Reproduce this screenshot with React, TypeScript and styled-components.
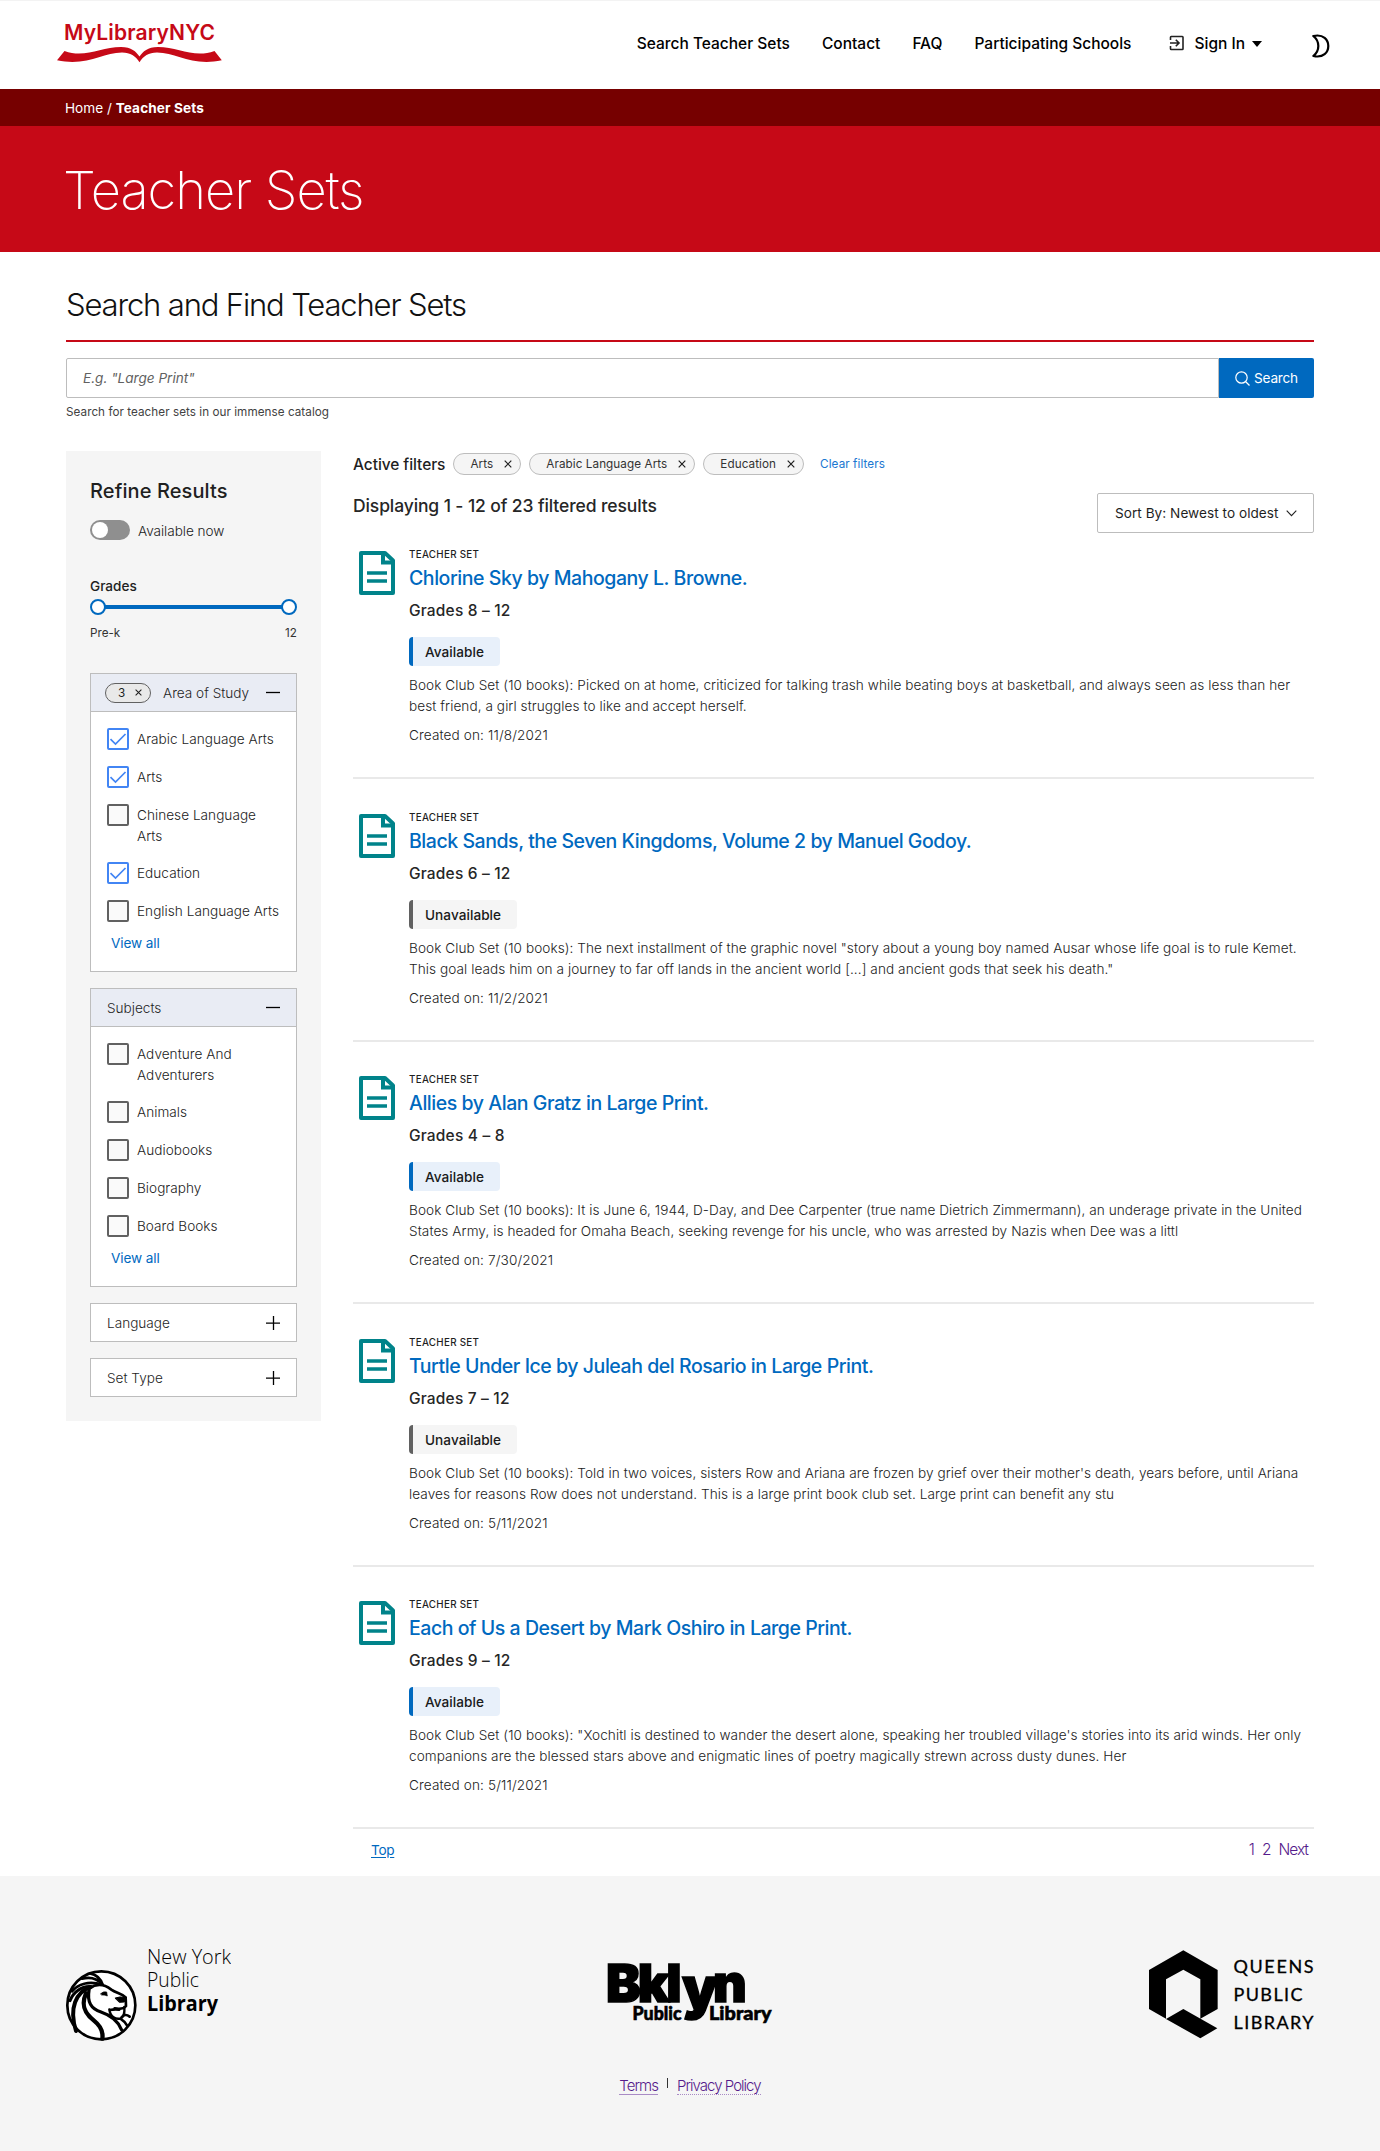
import React from 'react';
import styled, { createGlobalStyle } from 'styled-components';

const GlobalStyle = createGlobalStyle`
  *, *::before, *::after { box-sizing: border-box; }
  body { margin: 0; background: #fff; font-family: Inter, "Liberation Sans", sans-serif; color: #1f1f1f; }
  h1, h2, h3, p { margin: 0; }
  a { color: inherit; text-decoration: none; }
  svg { display: block; flex: none; }
  button { font: inherit; color: inherit; }
`;

/* ---------- header ---------- */

const Header = styled.header`
  height: 89px;
  border-top: 1px solid #f3f3f3;
  padding: 0 50px 0 57px;
  display: flex;
  align-items: flex-start;
  justify-content: space-between;
`;

const Nav = styled.nav`
  display: flex;
  align-items: center;
  gap: 32px;
  margin-top: 30px;
  font-size: 15.5px;
  font-weight: 500;
  line-height: 21px;
  color: #000;
  white-space: nowrap;
`;

const SignIn = styled.a`
  display: flex;
  align-items: center;
  gap: 9px;
  margin-left: 6px;
`;

const Caret = styled.span`
  border: 5px solid transparent;
  border-top: 6px solid #000;
  border-bottom: 0;
  margin: 2px 0 0 -2px;
`;

const ThemeToggle = styled.button`
  border: 0;
  padding: 0;
  background: none;
  margin: 3px 0 -3px 18px;
`;

const Breadcrumbs = styled.div`
  height: 37px;
  background: #760000;
  color: #fff;
  padding-left: 65px;
  font-size: 13.6px;
  line-height: 38px;
  white-space: pre;
  b { font-weight: 700; letter-spacing: 0.12px; }
`;

const Hero = styled.div`
  height: 126px;
  background: #c60917;
  padding: 1px 0 0 63px;
  h1 {
    font-size: 52.5px;
    font-weight: 200;
    line-height: 126px;
    letter-spacing: -1.05px;
    color: #fff;
  }
`;

/* ---------- search ---------- */

const Main = styled.main`
  padding: 33px 66px 0;
`;

const SectionTitle = styled.h2`
  font-size: 31px;
  font-weight: 300;
  line-height: 40px;
  letter-spacing: -1.15px;
  padding-bottom: 15px;
  border-bottom: 2px solid #c60917;
  color: #111;
`;

const SearchBar = styled.form`
  display: flex;
  height: 40px;
  margin-top: 16px;
`;

const SearchInput = styled.input`
  flex: 1;
  border: 1px solid #bdbdbd;
  border-radius: 2px 0 0 2px;
  padding: 0 16px;
  outline: 0;
  font: italic 400 13.6px/38px Inter, sans-serif;
  &::placeholder { color: #616161; opacity: 1; }
`;

const SearchButton = styled.button`
  width: 95px;
  border: 0;
  border-radius: 0 2px 2px 0;
  background: #0069bf;
  color: #fff;
  display: flex;
  align-items: center;
  justify-content: center;
  gap: 4px;
  padding: 0;
  font-size: 13.6px;
  letter-spacing: -0.2px;
`;

const HelperText = styled.p`
  margin-top: 6px;
  font-size: 11.7px;
  line-height: 16px;
  letter-spacing: 0.046px;
  color: #424242;
`;

const Columns = styled.div`
  display: flex;
  align-items: flex-start;
  gap: 32px;
  margin-top: 31px;
`;

/* ---------- sidebar ---------- */

const Sidebar = styled.aside`
  width: 255px;
  flex: none;
  background: #f5f5f5;
  padding: 26px 24px 24px;
`;

const SidebarTitle = styled.h3`
  font-size: 20px;
  font-weight: 500;
  line-height: 28px;
  letter-spacing: 0.1px;
`;

const ToggleRow = styled.label`
  display: flex;
  align-items: center;
  gap: 8px;
  margin-top: 15px;
  height: 20px;
  font-size: 13.6px;
  font-weight: 300;
  line-height: 20px;
  letter-spacing: -0.05px;
  color: #222;
`;

const ToggleLabel = styled.span`
  padding-top: 2px;
`;

const Switch = styled.span`
  width: 40px;
  height: 20px;
  border-radius: 10px;
  padding: 2px;
  background: #8f8f8f;
  &::before {
    content: '';
    display: block;
    width: 16px;
    height: 16px;
    border-radius: 50%;
    background: #fff;
  }
`;

const SliderLabel = styled.div`
  margin-top: 36px;
  font-size: 13.6px;
  font-weight: 500;
  line-height: 20px;
`;

const Slider = styled.div`
  display: flex;
  align-items: center;
  margin-top: 3px;
`;

const Thumb = styled.span`
  width: 16px;
  height: 16px;
  border: 2px solid #0069bf;
  border-radius: 50%;
  background: #fff;
`;

const Track = styled.span`
  flex: 1;
  height: 4px;
  margin: 0 -1px;
  background: #0069bf;
`;

const SliderRange = styled.div`
  display: flex;
  justify-content: space-between;
  margin: 10px 0 32px;
  font-size: 11.7px;
  line-height: 16px;
  color: #333;
`;

const Accordion = styled.section`
  background: #fff;
  border: 1px solid #bdbdbd;
  & + & { margin-top: 16px; }
`;

const AccordionHeader = styled.div<{ $open?: boolean }>`
  display: flex;
  align-items: center;
  height: ${(p) => (p.$open ? 38 : 37)}px;
  padding: 0 16px;
  background: ${(p) => (p.$open ? '#e9ecf4' : '#fff')};
  border-bottom: ${(p) => (p.$open ? '1px solid #bdbdbd' : '0')};
  font-size: 13.6px;
  font-weight: 300;
  color: #1f1f1f;
  svg:last-child { margin-left: auto; }
`;

const CountChip = styled.span`
  display: flex;
  align-items: center;
  justify-content: space-between;
  width: 46px;
  height: 20px;
  margin: 0 12px 0 -2px;
  padding: 0 8px 0 12px;
  border: 1px solid #616161;
  border-radius: 10px;
  background: #e9e9e9;
  font-size: 11.7px;
  font-weight: 400;
`;

const Options = styled.div`
  display: flex;
  flex-direction: column;
  gap: 16px;
  padding: 16px 15px 0 16px;
`;

const Option = styled.label`
  display: flex;
  align-items: flex-start;
  gap: 8px;
  min-height: 22px;
  font-size: 13.6px;
  font-weight: 300;
  line-height: 21px;
  letter-spacing: 0.03px;
  color: #222;
  span:last-child { margin: 1px 0 -1px; }
`;

const Box = styled.span<{ $checked: boolean }>`
  flex: none;
  width: 22px;
  height: 22px;
  border: 2px solid ${(p) => (p.$checked ? '#4285f4' : '#616161')};
  border-radius: 2px;
  background: ${(p) => (p.$checked ? '#fff' : '#fafafa')};
`;

const ViewAll = styled.a`
  display: block;
  padding: 11px 20px 18px;
  font-size: 13.6px;
  line-height: 20px;
  letter-spacing: -0.12px;
  color: #0069bf;
`;

/* ---------- results ---------- */

const Results = styled.section`
  flex: 1;
  min-width: 0;
  padding-top: 2px;
`;

const ActiveFilters = styled.div`
  display: flex;
  align-items: center;
  gap: 8px;
  height: 22px;
  font-size: 11.7px;
  letter-spacing: 0.08px;
`;

const FiltersLabel = styled.span`
  padding-top: 1px;
  font-size: 15.5px;
  font-weight: 500;
  letter-spacing: -0.07px;
  line-height: 22px;
`;

const Chip = styled.span`
  display: flex;
  align-items: center;
  gap: 11px;
  height: 22px;
  padding: 0 8px 0 16px;
  border: 1px solid #bdbdbd;
  border-radius: 11px;
  background: #f5f5f5;
  color: #333;
`;

const ClearFilters = styled.a`
  margin-left: 8px;
  color: #1b77d1;
`;

const Summary = styled.div`
  display: flex;
  align-items: flex-start;
  justify-content: space-between;
  margin: 18px 0 14px;
  h2 {
    font-size: 17.5px;
    font-weight: 500;
    line-height: 25px;
    letter-spacing: -0.11px;
    color: #262626;
  }
`;

const SortButton = styled.button`
  display: flex;
  align-items: center;
  justify-content: space-between;
  width: 217px;
  height: 40px;
  padding: 0 16px 0 17px;
  border: 1px solid #bdbdbd;
  border-radius: 2px;
  background: #fff;
  font-size: 13.6px;
  letter-spacing: 0.04px;
`;

const Card = styled.article`
  display: flex;
  align-items: flex-start;
  gap: 14px;
  height: 232px;
  padding-left: 6px;
  border-bottom: 2px solid #e9e9e9;
  & + & { margin-top: 30.5px; }
  > svg { margin-top: 4px; }
`;

const CardBody = styled.div`
  white-space: nowrap;
`;

const Kind = styled.div`
  font-size: 9.8px;
  font-weight: 500;
  line-height: 15px;
  letter-spacing: 0.31px;
`;

const CardTitle = styled.h3`
  margin-top: 3px;
  font-size: 19.5px;
  font-weight: 500;
  line-height: 26px;
  letter-spacing: -0.45px;
  color: #0069bf;
`;

const GradeRange = styled.div`
  margin-top: 10px;
  font-size: 15.5px;
  font-weight: 500;
  line-height: 20px;
  letter-spacing: 0.18px;
  color: #262626;
`;

const Status = styled.span<{ $available: boolean }>`
  display: table;
  margin-top: 16px;
  padding: 1px 16px 0 12px;
  border-left: 4px solid ${(p) => (p.$available ? '#0069bf' : '#616161')};
  border-radius: 4px;
  background: ${(p) => (p.$available ? '#e8f0fa' : '#f5f5f5')};
  font-size: 13.6px;
  font-weight: 500;
  line-height: 28px;
  letter-spacing: 0.05px;
  color: #1a1a1a;
`;

const Description = styled.p`
  margin-top: 9px;
  font-size: 13.6px;
  font-weight: 300;
  line-height: 21px;
  letter-spacing: 0.068px;
  color: #222;
`;

const Created = styled.p`
  margin-top: 8px;
  font-size: 13.6px;
  font-weight: 300;
  line-height: 20px;
  letter-spacing: 0.12px;
  color: #222;
`;

const Pager = styled.div`
  display: flex;
  justify-content: space-between;
  height: 47px;
  padding: 11px 6px 0 18px;
  line-height: 20px;
`;

const TopLink = styled.a`
  font-size: 13.6px;
  letter-spacing: -0.3px;
  color: #0069bf;
  text-decoration: underline;
  text-underline-offset: 2px;
`;

const Pages = styled.div`
  display: flex;
  gap: 8px;
  font-size: 15.5px;
  font-weight: 300;
  letter-spacing: -1px;
  color: #551a8b;
`;

/* ---------- footer ---------- */

const Footer = styled.footer`
  height: 275px;
  padding: 63px 66px 0;
  background: #f5f5f5;
`;

const Logos = styled.div`
  display: flex;
  justify-content: space-between;
`;

const FooterLinks = styled.div`
  display: flex;
  justify-content: center;
  align-items: flex-start;
  gap: 9px;
  margin-top: 32px;
  font-size: 15px;
  font-weight: 300;
  line-height: 17px;
  letter-spacing: -0.97px;
  color: #551a8b;
`;

const FooterLink = styled.a<{ $line: string }>`
  border-bottom: 1px ${(p) => p.$line} #a98bc5;
`;

const Divider = styled.span`
  width: 1px;
  height: 10px;
  margin-top: 1px;
  background: #333;
`;

/* ---------- drawings ---------- */

const BrandLogo = () => (
  <svg width="166" height="70" viewBox="57 1 166 70" fill="#c60917">
    <text x="64" y="40" fontFamily="Inter" fontSize="21" fontWeight="600" textLength="151">MyLibraryNYC</text>
    <path d="M57 60.3 64.5 51C85 58.500 101 47 121 47c10.500 0 15 4.500 18.500 9.500C143 51.500 147.500 47 158 47c20 0 36 11.500 56.500 4l7.300 9.300C191 66.500 177 52.500 157 52.500c-8.500 0-13.500 3.500-17.500 9.700-4-6.200-9-9.700-17.500-9.700-20 0-34 14-65 7.800Z" />
  </svg>
);

const SignInIcon = () => (
  <svg width="16" height="16" viewBox="0 0 16 16" fill="none" stroke="#222" strokeWidth="1.6">
    <path d="M1.500 5V2.200q0-.7.7-.7h11.100q.7 0 .7.700v11.600q0 .7-.7.700H2.200q-.7 0-.7-.7V11M1 8h8.500M6.800 4.800 10 8l-3.200 3.200" />
  </svg>
);

const MoonIcon = () => (
  <svg width="18" height="24" viewBox="0 0 18 24" fill="none" stroke="#000" strokeWidth="2.200" strokeLinejoin="round">
    <path d="M1.300 2C11.500-.3 16.300 5.800 16.300 12S11.500 24.300 1.300 22C8 16.700 8 7.300 1.300 2Z" />
  </svg>
);

const SearchIcon = () => (
  <svg width="15" height="15" viewBox="0 0 15 15" fill="none" stroke="#fff" strokeWidth="1.200">
    <circle cx="6.500" cy="6.500" r="5.700" />
    <path d="m10.500 10.500 4 4" />
  </svg>
);

const Cross = ({ size = 8 }: { size?: number }) => (
  <svg width={size} height={size} viewBox="0 0 8 8" fill="none" stroke="#1f1f1f" strokeWidth="1.200">
    <path d="m.7.7 6.600 6.600M7.300.7.7 7.300" />
  </svg>
);

const Minus = () => (
  <svg width="14" height="14" viewBox="0 0 14 14" stroke="#000" strokeWidth="1.300"><path d="M0 6.500h14" /></svg>
);

const Plus = () => (
  <svg width="14" height="14" viewBox="0 0 14 14" stroke="#000" strokeWidth="1.300"><path d="M0 7.200h14M7.500 0v14" /></svg>
);

const Check = () => (
  <svg width="18" height="18" viewBox="0 0 18 18" fill="none" stroke="#4285f4" strokeWidth="1.700">
    <path d="m1.500 9.200 5 4.800L16.500 4" />
  </svg>
);

const Chevron = () => (
  <svg width="11" height="7" viewBox="0 0 11 7" fill="none" stroke="#222" strokeWidth="1.100"><path d="m.7.7 4.800 5 4.800-5" /></svg>
);

const DocumentIcon = () => (
  <svg width="36" height="44" viewBox="0 0 36 44" fill="none" stroke="#00838a" strokeWidth="4">
    <path d="M2 2h24l8 7.500V42H2Z" strokeLinejoin="round" />
    <path d="M24 2v9.500h9" />
    <path d="M8 22h20M8 30h20" strokeWidth="3.700" />
  </svg>
);

const NyplLogo = () => (
  <svg width="165" height="106" viewBox="0 -6 165 106">
    <g transform="translate(-16 -15) scale(.3333)" fill="none" stroke="#000" strokeWidth="8" strokeLinecap="round">
      <circle cx="154" cy="226" r="102" fill="#fff" />
      <path d="M118 176c24-18 48-11 66 3 14 10 32 12 43 23l1 26c-6 8-22 9-34 7" />
      <path d="M178 238c2 22 20 32 34 27 12-5 12-18 11-34" strokeWidth="7" />
      <path d="M196 204q14-6 30-1l-3 13-14 1Z" fill="#000" strokeWidth="3" />
      <path d="M152 191q8-8 18-5l2 12q-7-4-16-3Z" fill="#000" strokeWidth="2" />
      <path d="M180 240q14-3 28-1" strokeWidth="8" />
      <path d="M117 180c-6 36 5 56 36 66 30 10 52 28 62 54" strokeWidth="10" />
      <path d="M108 190c-16 36-4 60 24 82 20 16 28 34 25 54" strokeWidth="13" />
      <path d="M122 171c-44 16-66 62-44 132" strokeWidth="12" />
      <path d="M60 212c10-26 34-44 62-42" strokeWidth="9" />
      <path d="M66 184c18-22 50-32 92-20" strokeWidth="8" />
      <path d="M96 146c24-6 44-2 60 16M120 130c20 4 32 16 38 34" strokeWidth="8" />
      <path d="M215 262c6-8 14-10 24-2M214 268q10 6 17 18" strokeWidth="8" />
    </g>
    <g fontFamily="Open Sans" fontSize="21" fill="#000">
      <text x="81" y="19.300" fontWeight="300" textLength="84" lengthAdjust="spacingAndGlyphs">New York</text>
      <text x="81" y="42.300" fontWeight="300" textLength="52" lengthAdjust="spacingAndGlyphs">Public</text>
      <text x="81" y="65.500" fontWeight="700" textLength="71" lengthAdjust="spacingAndGlyphs">Library</text>
    </g>
  </svg>
);

const BklynLogo = () => (
  <svg width="166" height="106" viewBox="0 -21 166 106" fill="#000" stroke="#000">
    <text x="-1" y="41.500" fontFamily="Inter" fontWeight="900" fontSize="52" strokeWidth="1.500" letterSpacing="-3">
      Bkl<tspan x="75" y="47.500" fontSize="57">y</tspan><tspan x="106" y="41.500">n</tspan>
    </text>
    <g fontFamily="Lato" fontWeight="900" fontSize="19" strokeWidth=".6">
      <text x="25.500" y="60" textLength="49" lengthAdjust="spacingAndGlyphs">Public</text>
      <text x="102" y="60" textLength="62.500" lengthAdjust="spacingAndGlyphs">Library</text>
    </g>
  </svg>
);

const QueensLogo = () => (
  <svg width="165" height="106" viewBox="0 -6 165 106">
    <path
      transform="translate(-19 -125) scale(.3333)"
      d="M57 450 160 391l103 59v117l-52 29V478l-51-29-52 29v118l-51-29ZM108 597l52-30 102 58-51 30Z"
    />
    <g fontFamily="Lato" fontSize="18" fontWeight="400" stroke="#000" strokeWidth=".3">
      <text x="84.500" y="28" textLength="80">QUEENS</text>
      <text x="84.500" y="56" textLength="69">PUBLIC</text>
      <text x="84.500" y="84" textLength="80">LIBRARY</text>
    </g>
  </svg>
);

/* ---------- data ---------- */

const areas: [string, boolean][] = [
  ['Arabic Language Arts', true],
  ['Arts', true],
  ['Chinese Language Arts', false],
  ['Education', true],
  ['English Language Arts', false],
];

const subjects: [string, boolean][] = [
  ['Adventure And Adventurers', false],
  ['Animals', false],
  ['Audiobooks', false],
  ['Biography', false],
  ['Board Books', false],
];

const sets = [
  {
    title: 'Chlorine Sky by Mahogany L. Browne.',
    grades: 'Grades 8 – 12',
    available: true,
    lines: [
      'Book Club Set (10 books): Picked on at home, criticized for talking trash while beating boys at basketball, and always seen as less than her',
      'best friend, a girl struggles to like and accept herself.',
    ],
    created: '11/8/2021',
  },
  {
    title: 'Black Sands, the Seven Kingdoms, Volume 2 by Manuel Godoy.',
    grades: 'Grades 6 – 12',
    available: false,
    lines: [
      'Book Club Set (10 books): The next installment of the graphic novel "story about a young boy named Ausar whose life goal is to rule Kemet.',
      'This goal leads him on a journey to far off lands in the ancient world [...] and ancient gods that seek his death."',
    ],
    created: '11/2/2021',
  },
  {
    title: 'Allies by Alan Gratz in Large Print.',
    grades: 'Grades 4 – 8',
    available: true,
    lines: [
      'Book Club Set (10 books): It is June 6, 1944, D-Day, and Dee Carpenter (true name Dietrich Zimmermann), an underage private in the United',
      'States Army, is headed for Omaha Beach, seeking revenge for his uncle, who was arrested by Nazis when Dee was a littl',
    ],
    created: '7/30/2021',
  },
  {
    title: 'Turtle Under Ice by Juleah del Rosario in Large Print.',
    grades: 'Grades 7 – 12',
    available: false,
    lines: [
      "Book Club Set (10 books): Told in two voices, sisters Row and Ariana are frozen by grief over their mother's death, years before, until Ariana",
      'leaves for reasons Row does not understand. This is a large print book club set. Large print can benefit any stu',
    ],
    created: '5/11/2021',
  },
  {
    title: 'Each of Us a Desert by Mark Oshiro in Large Print.',
    grades: 'Grades 9 – 12',
    available: true,
    lines: [
      'Book Club Set (10 books): "Xochitl is destined to wander the desert alone, speaking her troubled village\'s stories into its arid winds. Her only',
      'companions are the blessed stars above and enigmatic lines of poetry magically strewn across dusty dunes. Her',
    ],
    created: '5/11/2021',
  },
];

const OptionList = ({ items }: { items: [string, boolean][] }) => (
  <>
    <Options>
      {items.map(([label, checked]) => (
        <Option key={label}>
          <Box $checked={checked}>{checked && <Check />}</Box>
          <span>{label}</span>
        </Option>
      ))}
    </Options>
    <ViewAll>View all</ViewAll>
  </>
);

export default function App() {
  return (
    <>
      <GlobalStyle />
      <Header>
        <BrandLogo />
        <Nav>
          <a>Search Teacher Sets</a>
          <a>Contact</a>
          <a>FAQ</a>
          <a>Participating Schools</a>
          <SignIn>
            <SignInIcon />
            Sign In
            <Caret />
          </SignIn>
          <ThemeToggle aria-label="Dark mode"><MoonIcon /></ThemeToggle>
        </Nav>
      </Header>
      <Breadcrumbs>Home / <b>Teacher Sets</b></Breadcrumbs>
      <Hero><h1>Teacher Sets</h1></Hero>
      <Main>
        <SectionTitle>Search and Find Teacher Sets</SectionTitle>
        <SearchBar>
          <SearchInput placeholder={'E.g. "Large Print"'} />
          <SearchButton type="button"><SearchIcon />Search</SearchButton>
        </SearchBar>
        <HelperText>Search for teacher sets in our immense catalog</HelperText>
        <Columns>
          <Sidebar>
            <SidebarTitle>Refine Results</SidebarTitle>
            <ToggleRow><Switch /><ToggleLabel>Available now</ToggleLabel></ToggleRow>
            <SliderLabel>Grades</SliderLabel>
            <Slider><Thumb /><Track /><Thumb /></Slider>
            <SliderRange><span>Pre-k</span><span>12</span></SliderRange>
            <Accordion>
              <AccordionHeader $open>
                <CountChip>3<Cross size={7} /></CountChip>
                Area of Study
                <Minus />
              </AccordionHeader>
              <OptionList items={areas} />
            </Accordion>
            <Accordion>
              <AccordionHeader $open>Subjects<Minus /></AccordionHeader>
              <OptionList items={subjects} />
            </Accordion>
            <Accordion><AccordionHeader>Language<Plus /></AccordionHeader></Accordion>
            <Accordion><AccordionHeader>Set Type<Plus /></AccordionHeader></Accordion>
          </Sidebar>
          <Results>
            <ActiveFilters>
              <FiltersLabel>Active filters</FiltersLabel>
              {['Arts', 'Arabic Language Arts', 'Education'].map((name) => (
                <Chip key={name}>{name}<Cross /></Chip>
              ))}
              <ClearFilters>Clear filters</ClearFilters>
            </ActiveFilters>
            <Summary>
              <h2>Displaying 1 - 12 of 23 filtered results</h2>
              <SortButton>Sort By: Newest to oldest<Chevron /></SortButton>
            </Summary>
            {sets.map((s) => (
              <Card key={s.title}>
                <DocumentIcon />
                <CardBody>
                  <Kind>TEACHER SET</Kind>
                  <CardTitle>{s.title}</CardTitle>
                  <GradeRange>{s.grades}</GradeRange>
                  <Status $available={s.available}>{s.available ? 'Available' : 'Unavailable'}</Status>
                  <Description>{s.lines[0]}<br />{s.lines[1]}</Description>
                  <Created>Created on: {s.created}</Created>
                </CardBody>
              </Card>
            ))}
            <Pager>
              <TopLink>Top</TopLink>
              <Pages><a>1</a><a>2</a><a>Next</a></Pages>
            </Pager>
          </Results>
        </Columns>
      </Main>
      <Footer>
        <Logos>
          <NyplLogo />
          <BklynLogo />
          <QueensLogo />
        </Logos>
        <FooterLinks>
          <FooterLink $line="solid">Terms</FooterLink>
          <Divider />
          <FooterLink $line="dotted">Privacy Policy</FooterLink>
        </FooterLinks>
      </Footer>
    </>
  );
}
